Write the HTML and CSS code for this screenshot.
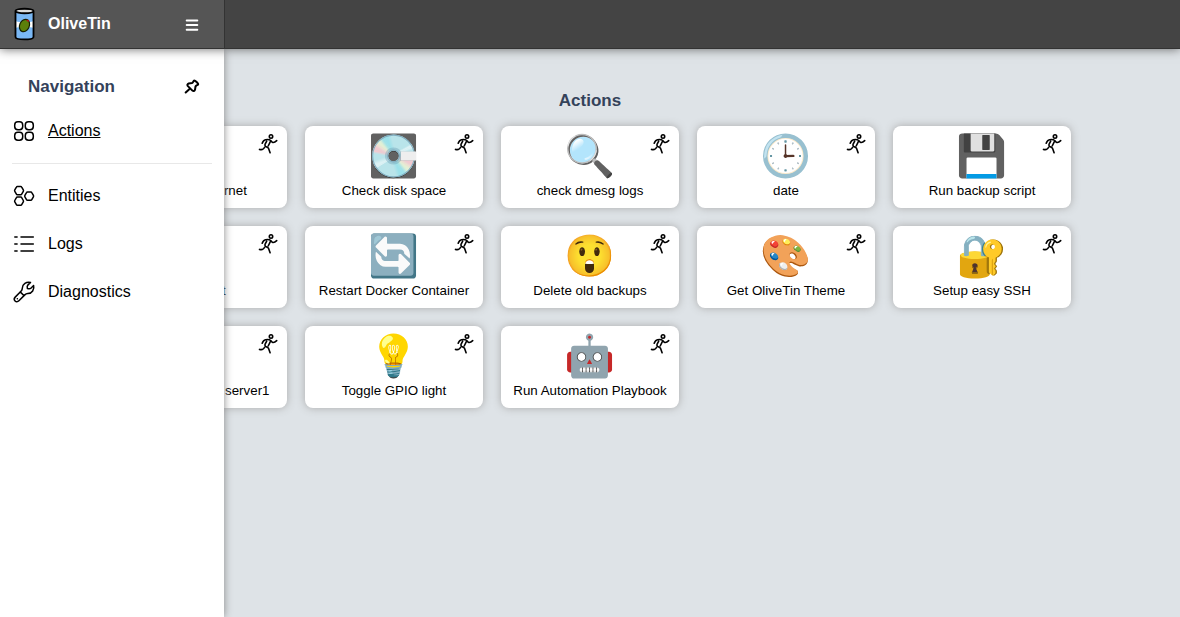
FILE: index.html
```html
<!DOCTYPE html>
<html lang="en">
<head>
<meta charset="utf-8">
<meta name="viewport" content="width=device-width, initial-scale=1">
<title>OliveTin</title>
<link rel="stylesheet" href="styles.css">
</head>
<body>
<svg class="defs" aria-hidden="true">
  <symbol id="run" viewBox="0 0 20 21">
    <circle cx="13" cy="3.5" r="1.7"/>
    <path d="M4.200 10.300C5 8 6 7 7.500 6.700c2-.4 4-.2 5.200.8l1.600 1.800c1.400.5 3-.3 4.400-1.700M8.700 8.200 7 11.400c-.4.9 0 1.400.7 1.900l2.800 1.900 1.600 4.500M12.600 8.200l-2.400 4.800M1.500 16.400c2.300.7 4.200-.1 5.300-2.400"/>
  </symbol>
</svg>
<header class="topbar">
  <div class="brand">
    <svg class="logo" viewBox="0 0 24 34" aria-hidden="true">
      <path d="M3.500 4v26c0 3.200 18 3.200 18 0V4z" fill="#7ab8f5"/>
      <path d="M3.500 14c4 2 8 0 9 0s5 2 9 0v7c-4-2-7 1-9 1s-5-3-9-1z" fill="#fff"/>
      <ellipse cx="12.500" cy="4" rx="9" ry="2.200" fill="#ddd"/>
      <path d="M3.500 4v26c0 3.200 18 3.200 18 0V4M3.500 4c0-3 18-3 18 0s-18 3-18 0z" fill="none" stroke="#000" stroke-width="1.800"/>
      <ellipse cx="12.500" cy="18.500" rx="4.800" ry="6.400" transform="rotate(24 12.500 18.500)" fill="#5c7f0b" stroke="#172000" stroke-width="1.200"/>
      <path d="M14.200 13c1.500-.8 3-.3 3 1.600-1.200.4-2.500-.3-3-1.600z" fill="#b3161b"/>
    </svg>
    <h1>OliveTin</h1>
    <button class="icon-button menu" type="button" aria-label="Toggle sidebar">
      <svg viewBox="0 0 16 16"><path d="M2.700 3.500h10.600M2.700 8h10.600M2.700 12.700h10.600"/></svg>
    </button>
  </div>
</header>
<aside class="sidebar">
  <div class="sidebar-head">
    <h2>Navigation</h2>
    <button class="icon-button" type="button" aria-label="Pin sidebar">
      <svg viewBox="0 0 16 16"><path d="M1.700 13.500 5 10.400M9.800 1.700C10.800.7 15 4.700 14 5.700c-1 .6-2 .6-2.500 1.800L11 10.800c-.4 1.400-1.600 1.700-2.600.8L3.900 7.100C3 6.100 3.400 4.900 4.700 4.500L8 4C9.200 3.600 9.100 2.700 9.800 1.700z"/></svg>
    </button>
  </div>
  <nav>
    <a class="current" href="#actions"><svg viewBox="0 0 24 24"><rect x="2.700" y="2.700" width="8" height="8" rx="3.200"/><rect x="13.300" y="2.700" width="8" height="8" rx="3.200"/><rect x="2.700" y="13.300" width="8" height="8" rx="3.200"/><rect x="13.300" y="13.300" width="8" height="8" rx="3.200"/></svg>Actions</a>
    <hr>
    <a href="#entities"><svg viewBox="0 0 24 24"><path d="M5.400 2.500h3.300q.7 0 1 .6l1.600 2.800q.4.700 0 1.400l-1.600 2.800q-.3.600-1 .6H5.400q-.7 0-1-.6L2.800 7.300q-.4-.7 0-1.400l1.600-2.800q.3-.6 1-.6zM5.400 13.100h3.300q.7 0 1 .6l1.600 2.800q.4.700 0 1.400l-1.600 2.800q-.3.600-1 .6H5.400q-.7 0-1-.6l-1.600-2.800q-.4-.7 0-1.400l1.600-2.800q.3-.6 1-.6zM15.500 8h3.300q.7 0 1 .6l1.600 2.800q.4.700 0 1.400l-1.600 2.800q-.3.600-1 .6h-3.300q-.7 0-1-.6l-1.600-2.800q-.4-.7 0-1.400l1.600-2.800q.3-.6 1-.6z"/></svg>Entities</a>
    <a href="#logs"><svg viewBox="0 0 24 24"><path d="M9 5h12.300M9 12h12.300M9 19h12.300M2.800 5h2.300M2.800 12h2.300M2.800 19h2.300"/></svg>Logs</a>
    <a href="#diagnostics"><svg viewBox="0 0 24 24"><path d="M18.500 2.400c-4-1-8.200 1.500-8.200 5.800 0 1.500-.3 2-1.300 3L3.200 17.100c-2.600 2.700 1 6.400 3.700 3.700l5.900-5.900c1-1 1.500-1.300 3-1.300 4.300 0 6.800-4.200 5.800-8.100l-2.700 2.700c-1 1-3.500.3-3.500.3s-.6-2.400.4-3.400zM8.200 11.900l3.900 3.900M5.300 18.800h.1"/></svg>Diagnostics</a>
  </nav>
</aside>
<main id="actions">
  <h2>Actions</h2>
  <div class="grid">
    <button class="action" type="button"><span class="emoji">📡</span>Ping the Internet<svg class="run"><use href="#run"/></svg></button>
    <button class="action" type="button"><span class="emoji">💽</span>Check disk space<svg class="run"><use href="#run"/></svg></button>
    <button class="action" type="button"><span class="emoji">🔍</span>check dmesg logs<svg class="run"><use href="#run"/></svg></button>
    <button class="action" type="button"><span class="emoji">🕒</span>date<svg class="run"><use href="#run"/></svg></button>
    <button class="action" type="button"><span class="emoji">💾</span>Run backup script<svg class="run"><use href="#run"/></svg></button>
    <button class="action" type="button"><span class="emoji">📡</span>Ping host<svg class="run"><use href="#run"/></svg></button>
    <button class="action" type="button"><span class="emoji">🔄</span>Restart Docker Container<svg class="run"><use href="#run"/></svg></button>
    <button class="action" type="button"><span class="emoji">😲</span>Delete old backups<svg class="run"><use href="#run"/></svg></button>
    <button class="action" type="button"><span class="emoji">🎨</span>Get OliveTin Theme<svg class="run"><use href="#run"/></svg></button>
    <button class="action" type="button"><span class="emoji">🔐</span>Setup easy SSH<svg class="run"><use href="#run"/></svg></button>
    <button class="action" type="button"><span class="emoji">🔄</span>Restart httpd on server1<svg class="run"><use href="#run"/></svg></button>
    <button class="action" type="button"><span class="emoji">💡</span>Toggle GPIO light<svg class="run"><use href="#run"/></svg></button>
    <button class="action" type="button"><span class="emoji">🤖</span>Run Automation Playbook<svg class="run"><use href="#run"/></svg></button>
  </div>
</main>
</body>
</html>
```
FILE: styles.css
```css
* { box-sizing: border-box; }

body {
  margin: 0;
  min-height: 100vh;
  background: #dee3e7;
  color: #000;
  font-family: "Liberation Sans", Arial, sans-serif;
}

h1, h2 { margin: 0; }
h1 { font-size: 16px; line-height: 20px; }
h2 { font-size: 17px; line-height: 22px; color: #34425a; }
.defs { position: absolute; width: 0; height: 0; }

.topbar {
  position: relative;
  z-index: 3;
  display: flex;
  background: #444;
  border-bottom: 1px solid #333;
  box-shadow: 0 0 10px #666;
  color: #fff;
}

.brand {
  display: flex;
  align-items: center;
  width: 225px;
  height: 48px;
  padding: 0 24px 0 12px;
  background: #555;
  border-right: 1px solid #333;
}

.logo { width: 24px; height: 34px; margin-right: 12px; }

.icon-button {
  display: flex;
  margin-left: auto;
  padding: 0;
  border: 0;
  background: none;
  color: inherit;
}

.icon-button svg {
  width: 16px;
  height: 16px;
  fill: none;
  stroke: currentColor;
  stroke-width: 2;
  stroke-linecap: round;
  stroke-linejoin: round;
}

.menu { padding-top: 2px; }
.sidebar-head .icon-button { color: #000; }

.sidebar {
  position: absolute;
  z-index: 2;
  top: 49px;
  bottom: 0;
  left: 0;
  width: 224px;
  padding-top: 18px;
  background: #fff;
  box-shadow: 0 0 8px #888;
}

.sidebar-head {
  display: flex;
  align-items: center;
  height: 40px;
  padding: 0 24px 0 28px;
}

.sidebar a {
  display: flex;
  align-items: center;
  gap: 12px;
  height: 48px;
  padding: 0 12px;
  color: #000;
  text-decoration: none;
}

.sidebar .current { text-decoration: underline; }

.sidebar a svg {
  width: 24px;
  height: 24px;
  fill: none;
  stroke: #000;
  stroke-width: 1.5;
  stroke-linecap: round;
  stroke-linejoin: round;
}

hr {
  margin: 8px 12px;
  border: 0;
  border-top: 1px solid #e8e8e8;
}

main { padding: 41px 16px 16px; text-align: center; }

.grid {
  display: grid;
  grid-template-columns: repeat(auto-fit, 178px);
  gap: 18px;
  justify-content: center;
  margin-top: 14px;
}

.action {
  position: relative;
  display: flex;
  flex-direction: column;
  align-items: center;
  justify-content: flex-start;
  min-height: 82px;
  padding: 6px 4px;
  border: 0;
  border-radius: 8px;
  background: #fff;
  box-shadow: 0 0 8px #aaa;
  color: #000;
  font-family: inherit;
  line-height: 22px;
  white-space: nowrap;
}

.emoji {
  height: 48px;
  font-family: "Noto Color Emoji", sans-serif;
  font-size: 41px;
  line-height: 48px;
}

.run {
  position: absolute;
  top: 7px;
  right: 9px;
  width: 20px;
  height: 21px;
  fill: none;
  stroke: #000;
  stroke-width: 1.6;
  stroke-linecap: round;
  stroke-linejoin: round;
}
```
